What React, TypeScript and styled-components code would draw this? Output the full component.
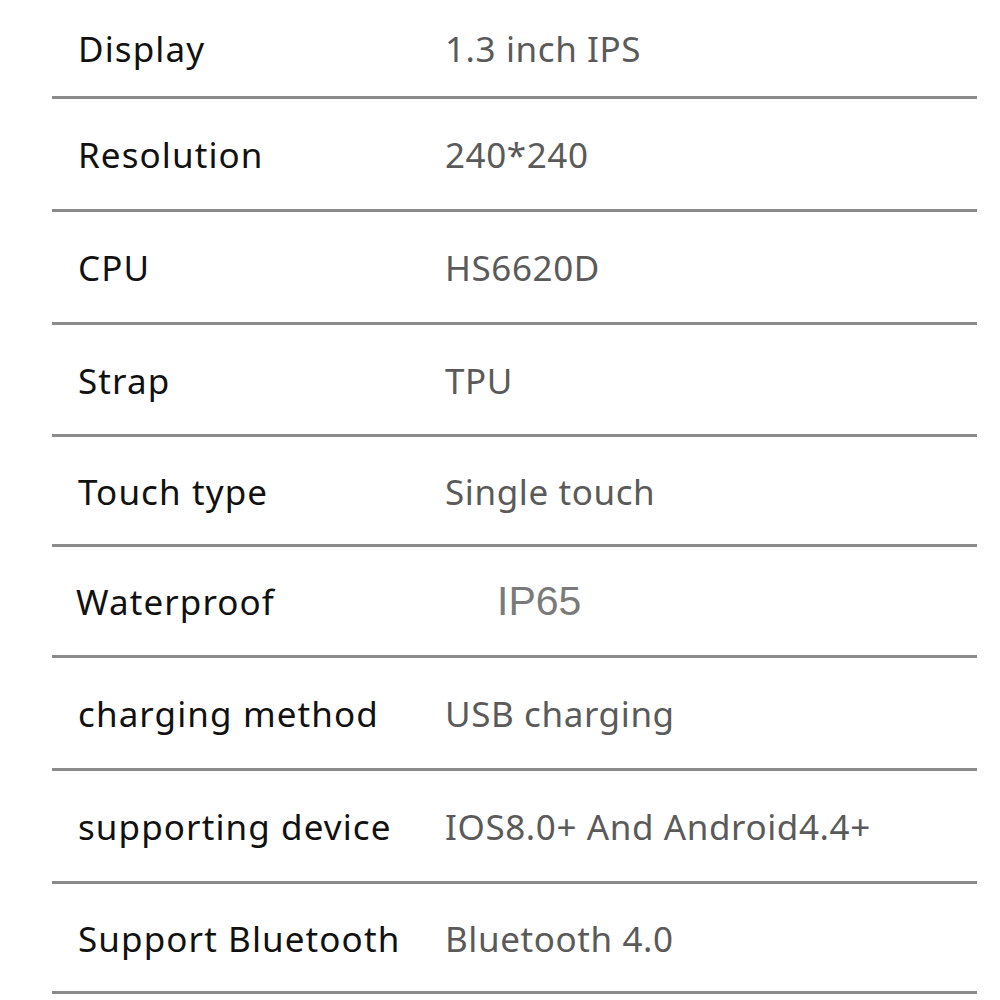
import React from "react";
import styled, { createGlobalStyle } from "styled-components";

const Global = createGlobalStyle`
  html, body { margin: 0; padding: 0; background: #fff; }
  body { width: 1000px; height: 1000px; overflow: hidden; }
`;

const Table = styled.div`
  display: flex;
  flex-direction: column;
  padding: 0 23px 0 52px;
`;

const Row = styled.div<{ $h: number }>`
  display: flex;
  align-items: center;
  height: ${(p) => p.$h}px;
  box-sizing: border-box;
  border-bottom: 3px solid #8a8a8a;
  padding-top: 1px;
`;

const Label = styled.div<{ $shift?: number }>`
  width: 393px;
  padding-left: ${(p) => 26 + (p.$shift || 0)}px;
  box-sizing: border-box;
  font-family: "Noto Sans", sans-serif;
  font-size: 35px;
  letter-spacing: 1.1px;
  color: #111;
  white-space: nowrap;
`;

const Value = styled.div<{ $alt?: boolean }>`
  font-family: ${(p) => (p.$alt ? '"Liberation Sans", Arial, sans-serif' : '"Noto Sans", sans-serif')};
  font-size: ${(p) => (p.$alt ? 41 : 35)}px;
  letter-spacing: ${(p) => (p.$alt ? 0 : 0.6)}px;
  color: ${(p) => (p.$alt ? "#7a7a7a" : "#5a5a5a")};
  padding-left: ${(p) => (p.$alt ? 52 : 0)}px;
  white-space: nowrap;
`;

const rows: { k: string; v: string; h: number; alt?: boolean; shift?: number }[] = [
  { k: "Display", v: "1.3 inch IPS", h: 99 },
  { k: "Resolution", v: "240*240", h: 113 },
  { k: "CPU", v: "HS6620D", h: 113 },
  { k: "Strap", v: "TPU", h: 112 },
  { k: "Touch type", v: "Single touch", h: 110 },
  { k: "Waterproof", v: "IP65", h: 111, alt: true, shift: -2 },
  { k: "charging method", v: "USB charging", h: 113 },
  { k: "supporting device", v: "IOS8.0+ And Android4.4+", h: 113 },
  { k: "Support Bluetooth", v: "Bluetooth 4.0", h: 110 },
];

export default function App() {
  return (
    <>
      <Global />
      <Table>
        {rows.map((r) => (
          <Row key={r.k} $h={r.h}>
            <Label $shift={r.shift}>{r.k}</Label>
            <Value $alt={r.alt}>{r.v}</Value>
          </Row>
        ))}
      </Table>
    </>
  );
}
